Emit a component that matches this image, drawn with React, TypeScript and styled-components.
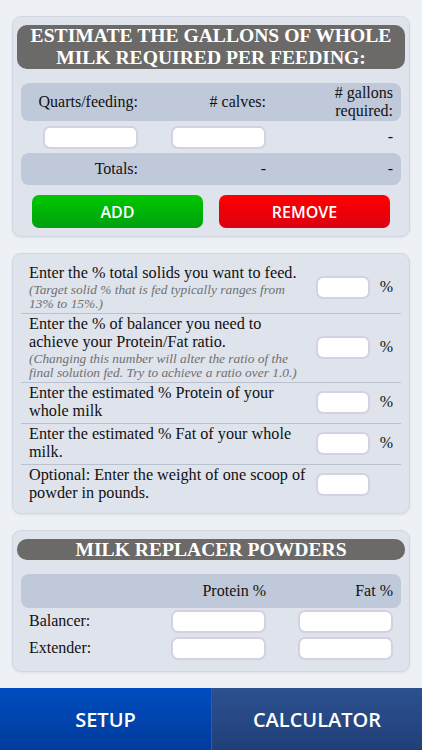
import styled, { createGlobalStyle } from 'styled-components';

const serif = "'Liberation Serif', 'Times New Roman', Times, serif";
const sans = "'Open Sans', 'Liberation Sans', Arial, sans-serif";

const GlobalStyle = createGlobalStyle`
  html, body {
    margin: 0;
    padding: 0;
    background: #edf0f5;
  }
  body {
    font-family: ${serif};
    color: #111;
  }
  * {
    box-sizing: border-box;
  }
`;

const Page = styled.div`
  display: flex;
  flex-direction: column;
  gap: 16px;
  padding: 16px 12px 80px;
  width: 422px;
  min-height: 750px;
  font-family: ${serif};
`;

const Card = styled.section<{ $pad?: string }>`
  background: #dfe3ec;
  border: 1px solid #d2d7e1;
  border-radius: 9px;
  box-shadow: 0 1px 3px rgba(0, 0, 0, 0.07);
  padding: ${(p) => p.$pad || '8px 4px'};
`;

const TitleBar = styled.h2<{ $lh?: number }>`
  margin: 0 0 14px;
  background: #6b6a68;
  border-radius: 10px;
  color: #fff;
  font-family: ${serif};
  font-weight: 700;
  font-size: 19.6px;
  line-height: ${(p) => p.$lh || 22}px;
  text-align: center;
  text-transform: uppercase;
  padding: 0 4px;
`;

const Grid = styled.div<{ $shaded?: boolean; $height: number }>`
  display: grid;
  grid-template-columns: 117px 128px 1fr;
  align-items: center;
  margin: 0 4px;
  padding-right: 8px;
  height: ${(p) => p.$height}px;
  background: ${(p) => (p.$shaded ? '#c0c9d9' : 'transparent')};
  border-radius: 8px;
  font-family: ${serif};
  font-size: 16px;
  line-height: 18px;
  color: #111;
`;

const Cell = styled.div<{ $left?: boolean }>`
  display: flex;
  justify-content: ${(p) => (p.$left ? 'flex-start' : 'flex-end')};
  text-align: ${(p) => (p.$left ? 'left' : 'right')};
  padding-left: ${(p) => (p.$left ? '8px' : '0')};
  font-family: ${serif};
`;

const Small = styled.span`
  font-family: ${serif};
  font-size: 16px;
  line-height: 18px;
`;

const Field = styled.div<{ $w?: number }>`
  width: ${(p) => p.$w || 95}px;
  height: 23px;
  background: #fff;
  border: 2px solid #d3d1e2;
  border-radius: 7px;
`;

const ButtonRow = styled.div`
  display: grid;
  grid-template-columns: 1fr 1fr;
  gap: 16px;
  margin: 10px 15px 0;
`;

const ActionButton = styled.button<{ $tone: 'add' | 'remove' }>`
  height: 33px;
  border: none;
  border-radius: 7px;
  color: #fff;
  font-family: ${sans};
  font-weight: 600;
  font-size: 16px;
  background: ${(p) =>
    p.$tone === 'add'
      ? 'linear-gradient(#00c800, #00a00e)'
      : 'linear-gradient(#ff0000, #dc0010)'};
`;

const Rows = styled.div`
  margin: 0 4px;
`;

const Row = styled.div`
  display: grid;
  grid-template-columns: 1fr 54px 23px;
  align-items: center;
  padding: 1px 8px 2px;
  & + & {
    border-top: 1px solid #b9c1cf;
  }
`;

const Prompt = styled.div`
  font-family: ${serif};
  font-size: 16.2px;
  line-height: 18.5px;
  padding-right: 8px;
`;

const Note = styled.div`
  font-family: ${serif};
  font-style: italic;
  font-size: 13.4px;
  line-height: 14px;
  color: #707070;
  padding-right: 4px;
`;

const Unit = styled.span`
  text-align: right;
  font-family: ${serif};
  font-size: 16px;
`;

const TabBar = styled.nav`
  position: fixed;
  left: 0;
  right: 0;
  bottom: 0;
  height: 62px;
  display: grid;
  grid-template-columns: 1fr 1fr;
`;

const Tab = styled.div<{ $active?: boolean }>`
  display: flex;
  align-items: center;
  justify-content: center;
  color: #fff;
  font-family: ${sans};
  font-weight: 600;
  font-size: 20px;
  background: ${(p) =>
    p.$active
      ? 'linear-gradient(#004cbf, #003c9c)'
      : 'linear-gradient(#2c5190, #203f78)'};
  border-left: ${(p) => (p.$active ? 'none' : '1px solid #3a5a90')};
`;

const inputRows = [
  {
    prompt: 'Enter the % total solids you want to feed.',
    note: '(Target solid % that is fed typically ranges from 13% to 15%.)',
    unit: '%',
  },
  {
    prompt: 'Enter the % of balancer you need to achieve your Protein/Fat ratio.',
    note: '(Changing this number will alter the ratio of the final solution fed. Try to achieve a ratio over 1.0.)',
    unit: '%',
  },
  { prompt: 'Enter the estimated % Protein of your whole milk', unit: '%' },
  { prompt: 'Enter the estimated % Fat of your whole milk.', unit: '%' },
  { prompt: 'Optional: Enter the weight of one scoop of powder in pounds.', unit: '' },
];

export default function App() {
  return (
    <>
      <GlobalStyle />
      <Page>
        <Card $pad="8px 4px 8px">
          <TitleBar>
            Estimate the gallons of whole
            <br />
            milk required per feeding:
          </TitleBar>
          <Grid $shaded $height={38}>
            <Cell>Quarts/feeding:</Cell>
            <Cell># calves:</Cell>
            <Cell>
              <Small>
                # gallons
                <br />
                required:
              </Small>
            </Cell>
          </Grid>
          <Grid $height={32}>
            <Cell>
              <Field />
            </Cell>
            <Cell>
              <Field />
            </Cell>
            <Cell>-</Cell>
          </Grid>
          <Grid $shaded $height={32}>
            <Cell>Totals:</Cell>
            <Cell>-</Cell>
            <Cell>-</Cell>
          </Grid>
          <ButtonRow>
            <ActionButton $tone="add">ADD</ActionButton>
            <ActionButton $tone="remove">REMOVE</ActionButton>
          </ButtonRow>
        </Card>

        <Card $pad="9px 4px 8px">
          <Rows>
            {inputRows.map((r) => (
              <Row key={r.prompt}>
                <div>
                  <Prompt>{r.prompt}</Prompt>
                  {r.note && <Note>{r.note}</Note>}
                </div>
                <Field $w={54} />
                <Unit>{r.unit}</Unit>
              </Row>
            ))}
          </Rows>
        </Card>

        <Card $pad="8px 4px 9px">
          <TitleBar $lh={21}>Milk replacer powders</TitleBar>
          <Grid $shaded $height={34}>
            <Cell />
            <Cell>Protein %</Cell>
            <Cell>Fat %</Cell>
          </Grid>
          <Grid $height={27}>
            <Cell $left>Balancer:</Cell>
            <Cell>
              <Field />
            </Cell>
            <Cell>
              <Field />
            </Cell>
          </Grid>
          <Grid $height={27}>
            <Cell $left>Extender:</Cell>
            <Cell>
              <Field />
            </Cell>
            <Cell>
              <Field />
            </Cell>
          </Grid>
        </Card>

        <Card $pad="8px 4px 9px">
          <TitleBar $lh={21}>Results</TitleBar>
        </Card>
      </Page>
      <TabBar>
        <Tab $active>SETUP</Tab>
        <Tab>CALCULATOR</Tab>
      </TabBar>
    </>
  );
}
